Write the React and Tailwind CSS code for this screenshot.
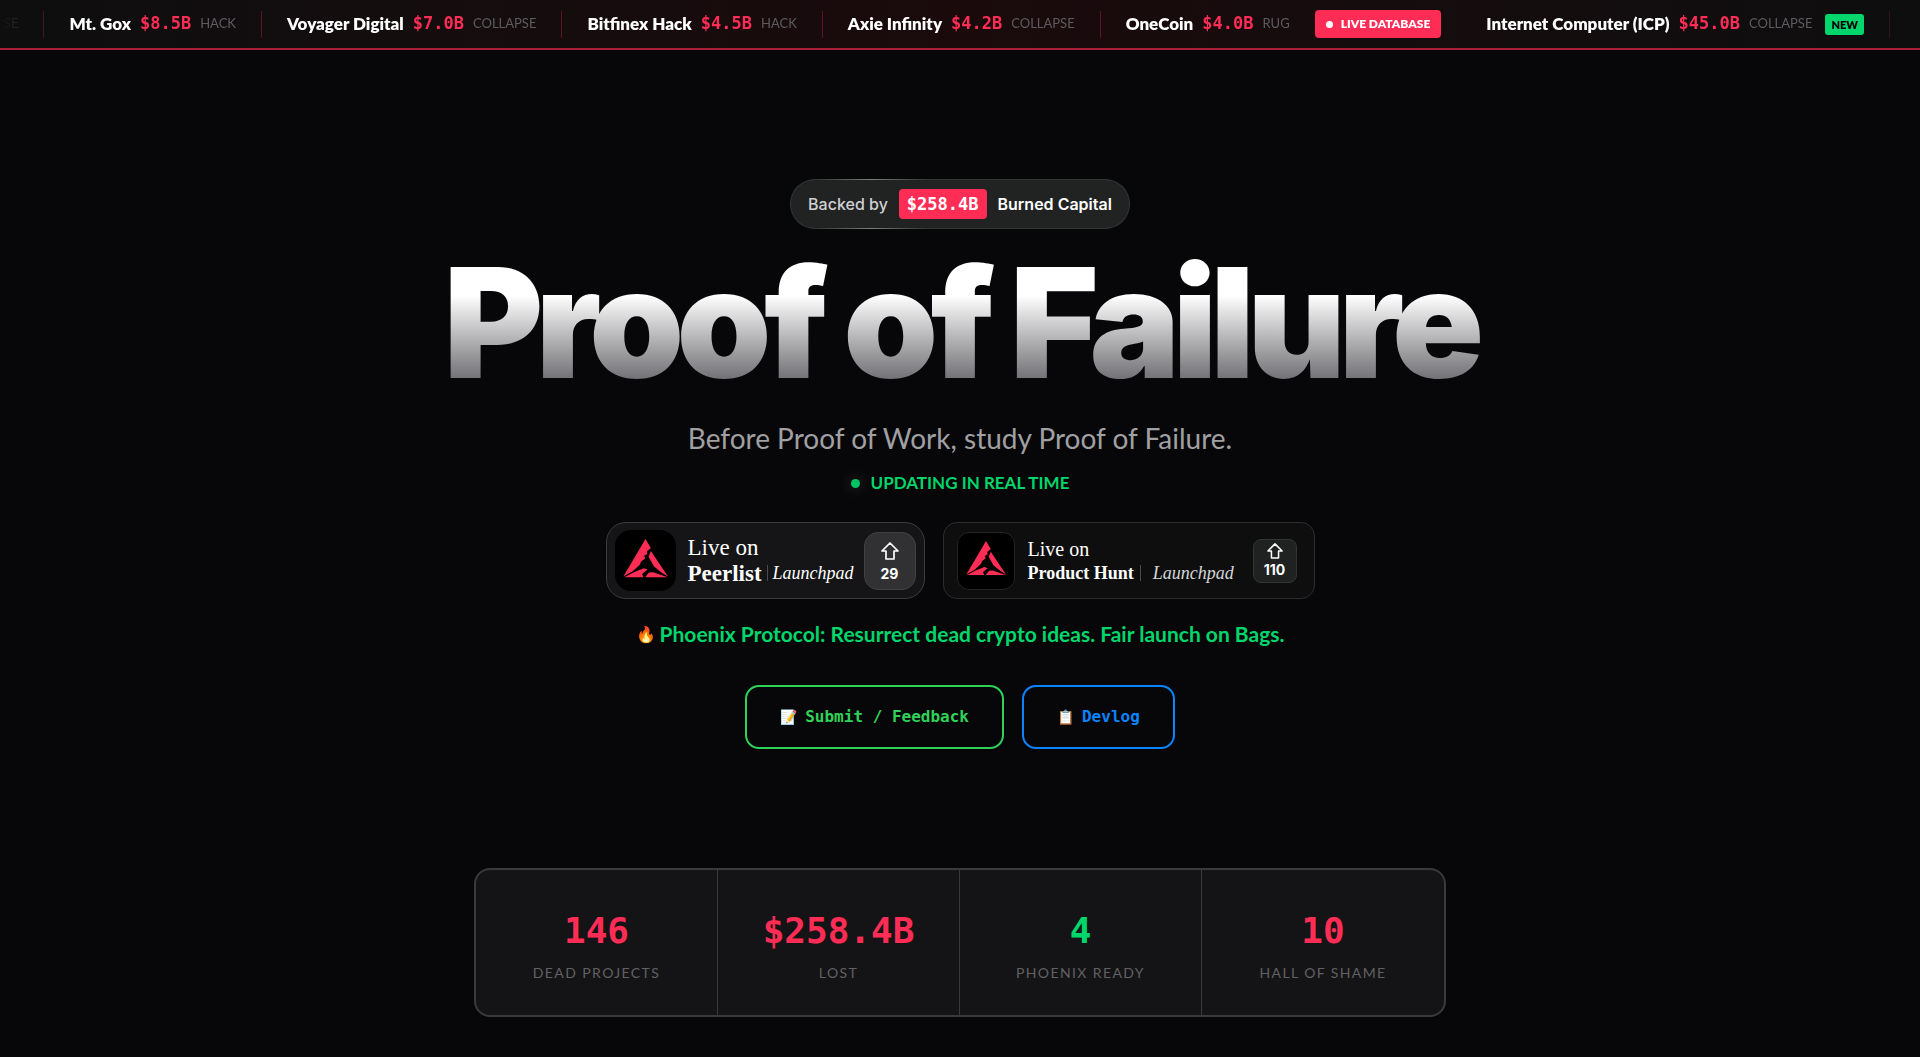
const ticker = [
  { name: "Mt. Gox", lost: "$8.5B", type: "HACK" },
  { name: "Voyager Digital", lost: "$7.0B", type: "COLLAPSE" },
  { name: "Bitfinex Hack", lost: "$4.5B", type: "HACK" },
  { name: "Axie Infinity", lost: "$4.2B", type: "COLLAPSE" },
];

const stats = [
  { value: "146", label: "DEAD PROJECTS", color: "text-[#ff2d55]" },
  { value: "$258.4B", label: "LOST", color: "text-[#ff2d55]" },
  { value: "4", label: "PHOENIX READY", color: "text-[#00d66b]" },
  { value: "10", label: "HALL OF SHAME", color: "text-[#ff2d55]" },
];

function Divider() {
  return <span className="h-[27px] w-px shrink-0 bg-[#ff2d55]/30" />;
}

function TickerItem({ name, lost, type }) {
  return (
    <div className="flex shrink-0 items-center gap-[9px] whitespace-nowrap">
      <span className="text-[17px] font-extrabold text-white">{name}</span>
      <span className="font-['DejaVu_Sans_Mono',monospace] text-[17px] font-bold text-[#ff2d55]">{lost}</span>
      <span className="text-[13px] text-[#5c5c60]">{type}</span>
    </div>
  );
}

function Ticker() {
  return (
    <header className="overflow-hidden border-b-2 border-[#ab2039] bg-linear-to-r from-[#0e0e0f] via-[#1a0a0c] to-[#0e0e0f]">
      <div className="mask-[linear-gradient(to_right,transparent,black_56px,black_calc(100%-56px),transparent)]">
        <div className="-ml-[45px] flex h-12 items-center gap-[25px]">
          <span className="shrink-0 text-[13px] text-[#5c5c60]">COLLAPSE</span>
          {ticker.map((item) => (
            <div key={item.name} className="flex shrink-0 items-center gap-[25px]">
              <Divider />
              <TickerItem {...item} />
            </div>
          ))}
          <Divider />
          <TickerItem name="OneCoin" lost="$4.0B" type="RUG" />
          <span className="flex h-7 shrink-0 items-center gap-2 rounded bg-[#ff2d55] px-[11px] text-[12px] font-extrabold whitespace-nowrap text-white">
            <span className="size-[7px] rounded-full bg-white" />
            LIVE DATABASE
          </span>
          <div className="ml-5 flex shrink-0 items-center gap-[13px]">
            <TickerItem name="Internet Computer (ICP)" lost="$45.0B" type="COLLAPSE" />
            <span className="rounded-[3px] bg-[#00d66b] px-[6px] text-[11px] leading-[21px] font-extrabold text-black">NEW</span>
          </div>
          <Divider />
        </div>
      </div>
    </header>
  );
}

function Logo({ className }) {
  return (
    <svg viewBox="0 0 134 114" className={className} fill="#ff2d55">
      <path d="M67 0 83 27 71 37 73 44 63 50 66 58 54 67 50 77 28 97 1 112Z" />
      <path d="M4 114 34 98 62 87 73 91 57 104 61 114Z" />
      <path d="M83 36 134 112 112 98 92 81 76 53Z" />
      <path d="M66 114 77 100 90 99 133 114Z" />
    </svg>
  );
}

function UpArrow({ className }) {
  return (
    <svg viewBox="0 0 18 18" className={className} fill="none" stroke="currentColor" strokeWidth="1.7" strokeLinejoin="round">
      <path d="M9 1 17 9H13V17H5V9H1Z" />
    </svg>
  );
}

function PeerlistBadge() {
  return (
    <a href="#peerlist" className="flex h-[77px] items-center rounded-[20px] border border-[#3c3c3e] bg-[#151517] px-2">
      <span className="flex size-[61px] items-center justify-center rounded-2xl bg-black">
        <Logo className="mb-1 w-[45px]" />
      </span>
      <span className="ml-3 w-[176px] font-['Liberation_Serif',serif] text-white">
        <span className="block text-[23px] leading-[25px]">Live on</span>
        <span className="flex items-center leading-[27px] whitespace-nowrap">
          <span className="text-[23px] font-bold">Peerlist</span>
          <span className="mx-[5px] h-4 w-px bg-[#4a4a4c]" />
          <span className="text-[18px] italic">Launchpad</span>
        </span>
      </span>
      <span className="flex h-[58px] w-[52px] flex-col items-center justify-center gap-1 rounded-[14px] border border-[#414143] bg-[#313133] text-white">
        <UpArrow className="mt-1 size-[18px]" />
        <span className="font-['Inter',sans-serif] text-[14px] leading-5 font-bold">29</span>
      </span>
    </a>
  );
}

function ProductHuntBadge() {
  return (
    <a href="#product-hunt" className="flex h-[77px] items-center rounded-[14px] border border-[#2d2d2e] bg-[#0e0e0f] pr-[17px] pl-[13px]">
      <span className="flex size-[58px] items-center justify-center rounded-xl border border-[#232325] bg-black">
        <Logo className="mb-1 w-[40px]" />
      </span>
      <span className="ml-[13px] w-[225px] font-['Liberation_Serif',serif] text-white">
        <span className="block text-[20px] leading-6">Live on</span>
        <span className="flex items-center text-[18px] leading-6 whitespace-nowrap">
          <span className="font-bold">Product Hunt</span>
          <span className="mr-3 ml-[6px] h-4 w-px bg-[#4a4a4c]" />
          <span className="text-[#d6d6d8] italic">Launchpad</span>
        </span>
      </span>
      <span className="flex size-[44px] flex-col items-center justify-center gap-[3px] rounded-lg border border-[#343436] bg-[#202222] text-white">
        <UpArrow className="size-4" />
        <span className="font-['Inter',sans-serif] text-[14px] leading-4 font-bold">110</span>
      </span>
    </a>
  );
}

function ActionButton({ icon, children, className }) {
  return (
    <button type="button" className={`flex h-16 items-center gap-2 rounded-[14px] border-2 px-[33px] font-['DejaVu_Sans_Mono',monospace] text-[16px] font-bold ${className}`}>
      <span className="text-[14px]">{icon}</span>
      {children}
    </button>
  );
}

export default function App() {
  return (
    <div className="min-h-screen bg-[#070709] font-['Lato',sans-serif]">
      <Ticker />
      <main className="flex flex-col items-center px-6 pt-[129px] pb-9">
        <div className="rounded-full bg-linear-to-r from-[#353737] from-8% via-[#7c7e7e] via-24% to-[#353737] to-40% p-px">
          <div className="flex h-12 items-center gap-[11px] rounded-full bg-[#212323] px-[17px] font-['Inter',sans-serif] text-[16px]">
            <span className="font-medium text-[#d0d0d2]">Backed by</span>
            <span className="rounded bg-[#ff2d55] px-2 font-['DejaVu_Sans_Mono',monospace] text-[17px] leading-[30px] font-bold text-white">$258.4B</span>
            <span className="font-semibold text-white">Burned Capital</span>
          </div>
        </div>

        <h1 className="mt-[18px] bg-linear-to-b from-white from-32% to-[#707074] to-88% bg-clip-text px-2 text-center font-['Inter',sans-serif] text-[152px] leading-none font-black tracking-tighter text-transparent">
          Proof of Failure
        </h1>

        <p className="mt-[21px] text-[28px] leading-9 text-[#a0a0a3]">Before Proof of Work, study Proof of Failure.</p>
        <p className="mt-[15px] flex items-center gap-[11px] text-[17px] leading-6 font-bold text-[#00d66b]">
          <span className="size-[9px] rounded-full bg-[#00c463] shadow-[0_0_12px_6px_rgba(255,255,255,0.05)]" />
          UPDATING IN REAL TIME
        </p>

        <div className="mt-[27px] flex gap-[18px]">
          <PeerlistBadge />
          <ProductHuntBadge />
        </div>

        <p className="mt-[21px] flex items-center gap-1 text-[21px] leading-7 font-bold text-[#00d66b]">
          <span className="text-[16px]">🔥</span>
          Phoenix Protocol: Resurrect dead crypto ideas. Fair launch on Bags.
        </p>

        <div className="mt-[37px] flex gap-[18px]">
          <ActionButton icon="📝" className="border-[#30d158] text-[#30d158]">Submit / Feedback</ActionButton>
          <ActionButton icon="📋" className="border-[#0a84ff] text-[#0a84ff]">Devlog</ActionButton>
        </div>

        <dl className="mt-[119px] grid w-full max-w-[972px] grid-cols-4 divide-x divide-[#39393b] rounded-2xl border-2 border-[#3a3a3c] bg-[#141416] text-center">
          {stats.map((stat) => (
            <div key={stat.label} className="flex flex-col-reverse pt-[35px] pb-8">
              <dt className="mt-[6px] text-[14px] leading-5 tracking-widest text-[#616164]">{stat.label}</dt>
              <dd className={`font-['DejaVu_Sans_Mono',monospace] text-[36px] leading-13 font-bold ${stat.color}`}>{stat.value}</dd>
            </div>
          ))}
        </dl>
      </main>
    </div>
  );
}
